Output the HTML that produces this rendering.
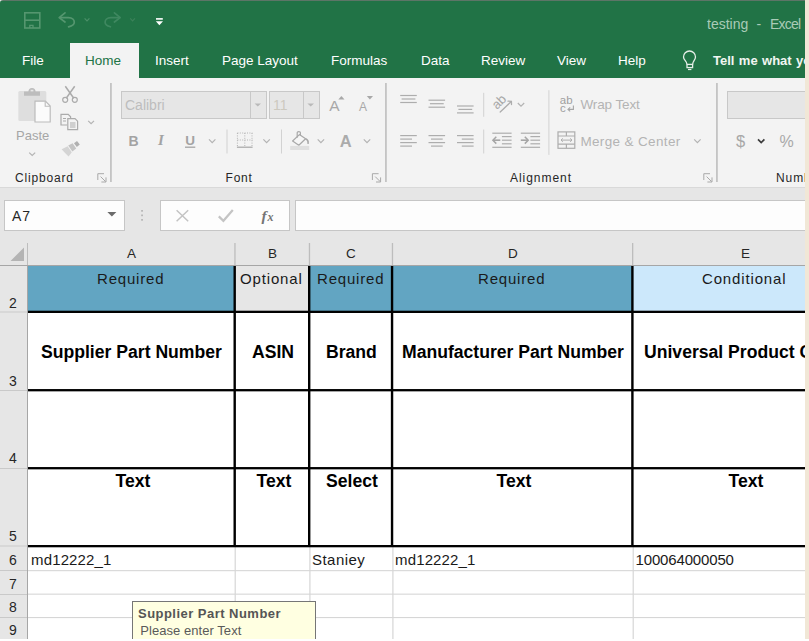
<!DOCTYPE html>
<html>
<head>
<meta charset="utf-8">
<title>testing - Excel</title>
<style>
*{box-sizing:border-box;margin:0;padding:0}
html,body{width:809px;height:641px;overflow:hidden;background:#fff}
body{font-family:"Liberation Sans",sans-serif;position:relative;color:#222}
#app{position:absolute;left:0;top:0;width:805px;height:639px;overflow:hidden;background:#e6e6e6}
#strip{position:absolute;left:805px;top:0;width:4px;height:639px;background:#f1e7d6}
.a{position:absolute}
.t{position:absolute;white-space:nowrap;line-height:1}
/* title */
#title{left:0;top:0;width:805px;height:78px;background:#217346}
#topline{left:0;top:0;width:805px;height:1px;background:#5d7567}
.tab{color:#fff;font-size:13.5px;top:54px}
#hometab{left:70px;top:43px;width:69px;height:36px;background:#f3f3f3}
/* ribbon */
#ribbon{left:0;top:78px;width:805px;height:109px;background:#f3f3f3}
#ribline{left:0;top:187px;width:805px;height:1px;background:#d9d9d9}
.gsep{width:2px;background:linear-gradient(to right,#c0c0c0,#d0d0d0);top:83px;height:99px}
.glabel{font-size:12px;color:#262626;top:172px;letter-spacing:.4px}
.dis{color:#a6a6a6}
.box{background:#e6e6e6;border:1px solid #c8c8c8}
/* formula bar */
.fbox{background:#fdfdfd;border:1px solid #c6c6c6}
/* grid */
#grid{left:0;top:243px;width:805px;height:396px;background:#fff}
.hdr{background:#e6e6e6}
.colh{font-size:13.5px;color:#262626;top:247px}
.rowh{font-size:14px;color:#262626;width:25.6px;text-align:center;left:0}
.hl{height:1px;background:#d4d4d4}
.vl{width:1px;background:#d4d4d4}
.bk{background:#000}
.c11{font-size:15px;color:#1a1a1a}
.b16{font-size:17.6px;font-weight:bold;color:#000}
</style>
</head>
<body>
<div id="app">
  <!-- TITLE BAR -->
  <div id="title" class="a"></div>
  <div id="topline" class="a"></div>
  <div id="hometab" class="a"></div>
  <svg class="a" style="left:0;top:0" width="200" height="43" viewBox="0 0 200 43" fill="none">
    <!-- rounded corner -->
    <path d="M0 0 H3 A3 3 0 0 0 0 3 Z" fill="#e9efe9"/>
    <!-- save -->
    <g stroke="#55966f" stroke-width="1.6">
      <rect x="24.8" y="12.8" width="15" height="15.2"/>
      <path d="M25 20.2 H40"/>
      <path d="M29.8 28 V25.4 H33 V28" stroke-width="1.3"/>
    </g>
    <!-- undo -->
    <g stroke="#55966f" stroke-width="1.7" stroke-linecap="round" stroke-linejoin="round">
      <path d="M65 12.8 L59.2 17.6 L65 22"/>
      <path d="M60 17.6 H68.5 C72.5 17.6 74.3 20 74.3 22.2 C74.3 24.6 72 26 68.6 26.8"/>
    </g>
    <path d="M84.6 18.4 L87 20.9 L89.4 18.4" stroke="#4b8f68" stroke-width="1.2"/>
    <!-- redo -->
    <g stroke="#3f8860" stroke-width="1.7" stroke-linecap="round" stroke-linejoin="round">
      <path d="M114.4 12.8 L120.2 17.6 L114.4 22"/>
      <path d="M119.4 17.6 H110.9 C106.9 17.6 105.1 20 105.1 22.2 C105.1 24.6 107.4 26 110.4 26.8"/>
    </g>
    <path d="M130.2 18.4 L132.6 20.9 L135 18.4" stroke="#3b8159" stroke-width="1.2"/>
    <!-- customize -->
    <rect x="156" y="18.1" width="6.8" height="1.6" fill="#fff"/>
    <path d="M155.8 21.3 H163 L159.4 25.2 Z" fill="#fff"/>
  </svg>
  <div class="t" style="left:707px;top:16.6px;font-size:14px;color:#a9cbb7">testing</div>
  <div class="t" style="left:756.6px;top:16.6px;font-size:14px;color:#a9cbb7">-</div>
  <div class="t" style="left:770px;top:16.6px;font-size:14px;color:#a9cbb7;letter-spacing:-.75px">Excel</div>
  <div class="t tab" style="left:22px">File</div>
  <div class="t tab" style="left:85px;color:#217346">Home</div>
  <div class="t tab" style="left:155px">Insert</div>
  <div class="t tab" style="left:222px">Page Layout</div>
  <div class="t tab" style="left:331px">Formulas</div>
  <div class="t tab" style="left:421px">Data</div>
  <div class="t tab" style="left:481px">Review</div>
  <div class="t tab" style="left:557px">View</div>
  <div class="t tab" style="left:618px">Help</div>
  <div class="t tab" style="left:713px;top:53.6px;font-weight:bold;font-size:13px;word-spacing:.8px;color:#f1f6f2">Tell me what you want to do</div>

  <svg class="a" style="left:678px;top:46px" width="24" height="28" viewBox="678 46 24 28" fill="none" stroke="#e6eee8" stroke-width="1.3">
    <path d="M687 64.4 C687 61.4 683.5 60 683.5 57 A6 6 0 0 1 695.5 57 C695.5 60 692.6 61.4 692.6 64.4"/>
    <rect x="687" y="64.4" width="5.6" height="3.2"/>
    <path d="M688 69.5 H691.4" stroke-width="1.2"/>
  </svg>
  <!-- RIBBON -->
  <div id="ribbon" class="a"></div>
  <div id="ribline" class="a"></div>
  <div class="a gsep" style="left:110px"></div>
  <div class="a gsep" style="left:384.6px"></div>
  <div class="a gsep" style="left:716px"></div>
  <!-- clipboard group -->
  <svg class="a" style="left:0;top:78px" width="112" height="110" viewBox="0 78 112 110" fill="none">
    <!-- paste -->
    <rect x="18.3" y="91" width="28" height="30" rx="1.5" fill="#dedede"/>
    <path d="M24 95.8 V91.6 H28.4 C28.4 89.6 29.8 88 32 88 C34.2 88 35.6 89.6 35.6 91.6 H40 V95.8 Z" fill="#bdbdbd"/>
    <rect x="30.6" y="89.8" width="2.8" height="1.6" fill="#e8e8e8"/>
    <path d="M35 101.2 H45.4 L50.2 106 V122 H35 Z" fill="#fbfbfb" stroke="#bcbcbc" stroke-width="1.2"/>
    <path d="M45.2 101.4 V106.2 H50" stroke="#bcbcbc" stroke-width="1.1"/>
    <path d="M29.2 152.6 L32.2 155.5 L35.2 152.6" stroke="#b3b3b3" stroke-width="1.2"/>
    <!-- scissors -->
    <g stroke="#ababab" stroke-width="1.5">
      <path d="M65.3 86.2 L73.8 98.2"/>
      <path d="M74.7 86.2 L66.2 98.2"/>
      <circle cx="65.2" cy="99.8" r="2.5" stroke-width="1.2"/>
      <circle cx="74.8" cy="99.8" r="2.5" stroke-width="1.2"/>
    </g>
    <!-- copy -->
    <g stroke="#ababab" stroke-width="1.2">
      <path d="M67 125 H61 V114.4 H68.2 L70.6 116.8 V118"/>
      <path d="M67.8 118.6 H75 L77.6 121.2 V129.6 H67.8 Z" fill="#f3f3f3"/>
      <path d="M63 118.5 H66 M63 121 H66 M70 123 H75.5 M70 125 H75.5 M70 127 H75.5" stroke-width="1"/>
    </g>
    <path d="M88.2 120.8 L91.1 123.7 L94 120.8" stroke="#b3b3b3" stroke-width="1.2"/>
    <!-- format painter -->
    <path d="M74 143.2 L77 141 L79.8 144.6 L76.8 147 Z" fill="#b0b0b0"/>
    <path d="M68.2 145.6 L72.6 143.2 L76.2 148.6 L72.4 151.6 Z" fill="#c4c4c4"/>
    <path d="M61.6 149.2 L67.6 146.2 L71.8 152.2 L68.6 156.6 C66 154 63.6 151.6 61.6 149.2 Z" fill="#d4d4d4"/>
    <!-- dialog launcher -->
    <g stroke="#a9a9a9" stroke-width="1">
      <path d="M97.8 180 V173.7 H104"/>
      <path d="M100.6 176.6 L105.6 181.6"/>
      <path d="M106 177.4 V182 H101.4"/>
    </g>
  </svg>
  <div class="t dis" style="left:16px;top:129px;font-size:13px">Paste</div>
  <div class="t glabel" style="left:15px;letter-spacing:.83px">Clipboard</div>
  <!-- font/alignment/number groups -->
  <div class="a box" style="left:121px;top:91px;width:146px;height:28px"></div>
  <div class="a" style="left:250px;top:92px;width:1px;height:26px;background:#c8c8c8"></div>
  <div class="a box" style="left:269px;top:91px;width:51px;height:28px"></div>
  <div class="a" style="left:303px;top:92px;width:1px;height:26px;background:#c8c8c8"></div>
  <div class="a box" style="left:727px;top:91px;width:90px;height:28px"></div>
  <div class="t" style="left:125px;top:98px;font-size:14px;color:#bdbdbd">Calibri</div>
  <div class="t" style="left:273px;top:98px;font-size:14px;color:#cdc9bf">11</div>
  <div class="t" style="left:128.5px;top:133.5px;font-size:14px;font-weight:bold;color:#a3a3a3">B</div>
  <div class="t" style="left:158px;top:132.5px;font-size:15px;font-style:italic;font-weight:bold;color:#a3a3a3;font-family:'Liberation Serif',serif">I</div>
  <div class="t" style="left:185.3px;top:133.5px;font-size:13.5px;font-weight:bold;color:#a3a3a3">U</div>
  <div class="t" style="left:329.3px;top:98px;font-size:15.5px;color:#a8a8a8">A</div>
  <div class="t" style="left:359px;top:101px;font-size:12px;color:#a8a8a8">A</div>
  <div class="t" style="left:339.8px;top:132.8px;font-size:16.5px;font-weight:bold;color:#ababab">A</div>
  <div class="t dis" style="left:580.4px;top:98.4px;font-size:13.5px;letter-spacing:-.1px;color:#b4b4b4">Wrap Text</div>
  <div class="t dis" style="left:580.4px;top:135px;font-size:13.5px;letter-spacing:.35px;color:#b4b4b4">Merge &amp; Center</div>
  <div class="t" style="left:736px;top:132.8px;font-size:16.5px;color:#a8a8a8">$</div>
  <div class="t" style="left:779.5px;top:133.6px;font-size:16px;color:#a8a8a8">%</div>
  <svg class="a" style="left:112px;top:78px" width="693" height="110" viewBox="112 78 693 110" fill="none">
    <!-- dropdown arrows -->
    <path d="M254.6 103.4 H261 L257.8 106.6 Z" fill="#b9b9b9"/>
    <path d="M307.4 103.4 H314 L310.7 106.6 Z" fill="#b9b9b9"/>
    <!-- U underline -->
    <path d="M185 147.2 H195.3" stroke="#a3a3a3" stroke-width="1.3"/>
    <path d="M209 139.4 L212.2 142.6 L215.4 139.4" stroke="#b3b3b3" stroke-width="1.2" fill="none"/>
    <rect x="226.5" y="129.5" width="1" height="24.0" fill="#d2d2d2"/>
    <!-- borders icon -->
    <g stroke="#b3b3b3" stroke-width="1" stroke-dasharray="1 1.4">
      <path d="M237.4 133 H252.4 M237.4 140 H252.4"/>
      <path d="M237.4 133 V146.5 M244.8 133 V146.5 M252 133 V146.5"/>
    </g>
    <path d="M236.9 147.2 H252.6" stroke="#a6a6a6" stroke-width="1.2"/>
    <path d="M263.4 139.4 L266.59999999999997 142.6 L269.79999999999995 139.4" stroke="#b3b3b3" stroke-width="1.2" fill="none"/>
    <rect x="281" y="129.5" width="1" height="24.0" fill="#d2d2d2"/>
    <!-- fill bucket -->
    <g stroke="#a8a8a8" stroke-width="1.2" stroke-linejoin="round">
      <path d="M299.4 134.6 L292.6 141 L298.8 145.2 L305.6 138.8 Z" fill="#f6f6f6"/>
      <path d="M297.2 137.8 V132.6 C297.2 131.2 300.4 131.2 300.4 132.6 V135.6"/>
      <path d="M305.6 138.8 C307.6 139.6 308.4 141.6 308 143.8" stroke-width="1.6"/>
    </g>
    <rect x="290.2" y="145.9" width="19" height="4.1" fill="#dfdfdf"/>
    <path d="M317.7 139.4 L320.9 142.6 L324.09999999999997 139.4" stroke="#b3b3b3" stroke-width="1.2" fill="none"/>
    <!-- grow/shrink triangles -->
    <path d="M338.3 99.5 L341.4 96 L344.5 99.5 Z" fill="#a8a8a8"/>
    <path d="M366.8 96 H373 L369.9 99.5 Z" fill="#a8a8a8"/>
    <path d="M363.8 139.4 L367.0 142.6 L370.2 139.4" stroke="#b3b3b3" stroke-width="1.2" fill="none"/>
    <g stroke="#a9a9a9" stroke-width="1" fill="none"><path d="M372.4 180.0 V173.7 H378.59999999999997"/><path d="M375.2 176.6 L380.2 181.6"/><path d="M380.59999999999997 177.39999999999998 V182.0 H376.0"/></g>
    <!-- align icons -->
    <path d="M400.2 95.5 H416.8" stroke="#adadad" stroke-width="1.2"/><path d="M401.59999999999997 99 H415.40000000000003" stroke="#adadad" stroke-width="1.2"/><path d="M400.2 102.5 H416.8" stroke="#adadad" stroke-width="1.2"/><path d="M428.5 100.2 H445.1" stroke="#adadad" stroke-width="1.2"/><path d="M429.9 103.7 H443.70000000000005" stroke="#adadad" stroke-width="1.2"/><path d="M428.5 107.2 H445.1" stroke="#adadad" stroke-width="1.2"/><path d="M457 106 H473.6" stroke="#adadad" stroke-width="1.2"/><path d="M458.4 109.4 H472.20000000000005" stroke="#adadad" stroke-width="1.2"/><path d="M457 112.9 H473.6" stroke="#adadad" stroke-width="1.2"/><path d="M400.2 135.6 H416.8" stroke="#adadad" stroke-width="1.2"/><path d="M428.5 135.6 H445.1" stroke="#adadad" stroke-width="1.2"/><path d="M457 135.6 H473.6" stroke="#adadad" stroke-width="1.2"/><path d="M400.2 139.1 H412" stroke="#adadad" stroke-width="1.2"/><path d="M431 139.1 H442.7" stroke="#adadad" stroke-width="1.2"/><path d="M461.8 139.1 H473.6" stroke="#adadad" stroke-width="1.2"/><path d="M400.2 142.6 H416.8" stroke="#adadad" stroke-width="1.2"/><path d="M428.5 142.6 H445.1" stroke="#adadad" stroke-width="1.2"/><path d="M457 142.6 H473.6" stroke="#adadad" stroke-width="1.2"/><path d="M400.2 146.1 H412" stroke="#adadad" stroke-width="1.2"/><path d="M431 146.1 H442.7" stroke="#adadad" stroke-width="1.2"/><path d="M461.8 146.1 H473.6" stroke="#adadad" stroke-width="1.2"/><path d="M492.3 133.2 H511.6" stroke="#adadad" stroke-width="1.2"/><path d="M492.3 147.3 H511.6" stroke="#adadad" stroke-width="1.2"/><path d="M501.90000000000003 136.6 H511.6" stroke="#adadad" stroke-width="1.2"/><path d="M501.90000000000003 140.2 H511.6" stroke="#adadad" stroke-width="1.2"/><path d="M501.90000000000003 143.8 H511.6" stroke="#adadad" stroke-width="1.2"/><path d="M500.3 140.2 H493.3" stroke="#a6a6a6" stroke-width="1.6"/><path d="M496.3 136.8 L492.90000000000003 140.2 L496.3 143.6" stroke="#a6a6a6" stroke-width="1.5" fill="none"/><path d="M520.8 133.2 H540.0999999999999" stroke="#adadad" stroke-width="1.2"/><path d="M520.8 147.3 H540.0999999999999" stroke="#adadad" stroke-width="1.2"/><path d="M530.4 136.6 H540.0999999999999" stroke="#adadad" stroke-width="1.2"/><path d="M530.4 140.2 H540.0999999999999" stroke="#adadad" stroke-width="1.2"/><path d="M530.4 143.8 H540.0999999999999" stroke="#adadad" stroke-width="1.2"/><path d="M520.8 140.2 H527.8" stroke="#a6a6a6" stroke-width="1.6"/><path d="M524.8 136.8 L528.1999999999999 140.2 L524.8 143.6" stroke="#a6a6a6" stroke-width="1.5" fill="none"/>
    <rect x="483.2" y="92.8" width="1" height="24.0" fill="#d2d2d2"/>
    <rect x="483.2" y="129.5" width="1" height="24.0" fill="#d2d2d2"/>
    <!-- orientation -->
    <g stroke="#adadad" stroke-width="1.3" stroke-linecap="round">
      <path d="M500.2 112 L511 101.8"/>
      <path d="M508 101.1 L511.4 101.3 L511.5 104.6"/>
    </g>
    <g transform="translate(497 110) rotate(-45)">
      <text x="0" y="0" font-family="Liberation Sans, sans-serif" font-size="13" fill="#a8a8a8">ab</text>
    </g>
    <path d="M517.8 103 L521.0 106.2 L524.1999999999999 103" stroke="#b3b3b3" stroke-width="1.2" fill="none"/>
    <rect x="548.4" y="90.2" width="1" height="64.7" fill="#d2d2d2"/>
    <!-- wrap text icon -->
    <text x="559.8" y="103.8" font-family="Liberation Sans, sans-serif" font-size="11.5" fill="#a0a0a0">ab</text>
    <text x="560" y="112.2" font-family="Liberation Sans, sans-serif" font-size="11.5" fill="#a0a0a0">c</text>
    <path d="M573.4 105.6 V109.4 H568.4" stroke="#a6a6a6" stroke-width="1.1"/>
    <path d="M570.2 107.4 L568 109.4 L570.2 111.4" stroke="#a6a6a6" stroke-width="1.1"/>
    <!-- merge icon -->
    <g stroke="#adadad" stroke-width="1.2">
      <rect x="558" y="131.9" width="16.8" height="16.4"/>
      <path d="M558 136 H574.8 M558 144.2 H574.8 M566.4 131.9 V136 M566.4 144.2 V148.3"/>
      <path d="M561 140.1 H572" stroke-width="1"/>
      <path d="M562.8 138.4 L561 140.1 L562.8 141.8 M570.2 138.4 L572 140.1 L570.2 141.8" stroke-width="1"/>
    </g>
    <path d="M694.2 139.4 L697.4000000000001 142.6 L700.6 139.4" stroke="#b3b3b3" stroke-width="1.2" fill="none"/>
    <g stroke="#a9a9a9" stroke-width="1" fill="none"><path d="M703.8 180.0 V173.7 H710.0"/><path d="M706.5999999999999 176.6 L711.5999999999999 181.6"/><path d="M712.0 177.39999999999998 V182.0 H707.4"/></g>
    <path d="M758 139.4 L761.2 142.6 L764.4 139.4" stroke="#3c3c3c" stroke-width="1.7" fill="none"/>
  </svg>
  <div class="t glabel" style="left:225.6px;letter-spacing:.75px">Font</div>
  <div class="t glabel" style="left:510px;letter-spacing:.96px">Alignment</div>
  <div class="t glabel" style="left:776px;letter-spacing:.9px">Number</div>

  <!-- FORMULA BAR -->
  <div class="a fbox" style="left:4px;top:200px;width:120.5px;height:31px"></div>
  <div class="t" style="left:12px;top:208.8px;font-size:14px;color:#262626;letter-spacing:1px">A7</div>
  <div class="a fbox" style="left:160px;top:200px;width:130px;height:31px"></div>
  <div class="a fbox" style="left:295px;top:200px;width:520px;height:31px"></div>

  <svg class="a" style="left:100px;top:196px" width="200" height="40" viewBox="100 196 200 40" fill="none">
    <path d="M107.4 211.9 H116.4 L111.9 216.4 Z" fill="#6b6b6b"/>
    <g fill="#b3b3b3"><rect x="141.2" y="210" width="1.7" height="1.7"/><rect x="141.2" y="214.5" width="1.7" height="1.7"/><rect x="141.2" y="219" width="1.7" height="1.7"/></g>
    <path d="M176.6 210.2 L188.2 221.2 M188.2 210.2 L176.6 221.2" stroke="#c3c3c3" stroke-width="1.5"/>
    <path d="M218.8 216.4 L223.4 220.8 L232.8 210" stroke="#c4c4c4" stroke-width="2.2"/>
    <text x="261.6" y="221" font-family="Liberation Serif, serif" font-style="italic" font-weight="bold" font-size="15.5" fill="#757575">f</text>
    <text x="267.4" y="221.4" font-family="Liberation Serif, serif" font-style="italic" font-weight="bold" font-size="12" fill="#757575">x</text>
  </svg>
  <!-- GRID -->
  <div id="grid" class="a"></div>
  <!-- header bands -->
  <div class="a hdr" style="left:0;top:243px;width:805px;height:23px"></div>
  <div class="a hdr" style="left:0;top:243px;width:28px;height:396px"></div>
  <!-- row 2 fills -->
  <div class="a" style="left:28px;top:266px;width:207px;height:46px;background:#62a5c2"></div>
  <div class="a" style="left:235px;top:266px;width:75px;height:46px;background:#e6e6e6"></div>
  <div class="a" style="left:310px;top:266px;width:323px;height:46px;background:#62a5c2"></div>
  <div class="a" style="left:633px;top:266px;width:172px;height:46px;background:#cce8fb"></div>
  <svg class="a" style="left:0;top:243px" width="805" height="396" viewBox="0 243 805 396">
    <!-- thin grid lines -->
    <g fill="#d6d6d6">
      <rect x="28" y="570.1" width="777" height="1.1"/>
      <rect x="28" y="593.6" width="777" height="1.1"/>
      <rect x="28" y="617" width="777" height="1.1"/>
      <rect x="234.6" y="547" width="1.2" height="92"/>
      <rect x="309.3" y="547" width="1.2" height="92"/>
      <rect x="392.3" y="547" width="1.2" height="92"/>
      <rect x="632.6" y="547" width="1.2" height="92"/>
    </g>
    <!-- header lines -->
    <g fill="#bdbdbd">
      <rect x="27" y="243" width="1" height="22"/>
      <rect x="234.3" y="243" width="1.3" height="22"/>
      <rect x="308.8" y="243" width="1.3" height="22"/>
      <rect x="391.8" y="243" width="1.3" height="22"/>
      <rect x="632" y="243" width="1.3" height="22"/>
    </g>
    <g fill="#a6a6a6">
      <rect x="0" y="265" width="805" height="1"/>
      <rect x="27" y="265" width="1" height="374"/>
    </g>
    <g fill="#c9c9c9">
      <rect x="0" y="311.5" width="27" height="1"/>
      <rect x="0" y="390" width="27" height="1"/>
      <rect x="0" y="468" width="27" height="1"/>
      <rect x="0" y="545.5" width="27" height="1"/>
      <rect x="0" y="570" width="27" height="1"/>
      <rect x="0" y="594" width="27" height="1"/>
      <rect x="0" y="617" width="27" height="1"/>
    </g>
    <!-- thick black borders -->
    <g fill="#000">
      <rect x="28" y="310.7" width="777" height="2.3"/>
      <rect x="28" y="389.05" width="777" height="2.3"/>
      <rect x="28" y="467.05" width="777" height="2.3"/>
      <rect x="28" y="545" width="777" height="2.3"/>
      <rect x="233.5" y="266" width="2.4" height="280"/>
      <rect x="308" y="266" width="2.4" height="280"/>
      <rect x="390.85" y="266" width="2.4" height="280"/>
      <rect x="631.2" y="266" width="2.4" height="280"/>
    </g>
    <!-- select all triangle -->
    <path d="M24 247.5 L24 261 L10.5 261 Z" fill="#b4b4b4"/>
  </svg>
  <!-- column letters -->
  <div class="t colh" style="left:127px">A</div>
  <div class="t colh" style="left:268px">B</div>
  <div class="t colh" style="left:346px">C</div>
  <div class="t colh" style="left:508px">D</div>
  <div class="t colh" style="left:741px">E</div>
  <!-- row numbers -->
  <div class="t rowh" style="top:295.6px">2</div>
  <div class="t rowh" style="top:374px">3</div>
  <div class="t rowh" style="top:450.6px">4</div>
  <div class="t rowh" style="top:529px">5</div>
  <div class="t rowh" style="top:553px">6</div>
  <div class="t rowh" style="top:577px">7</div>
  <div class="t rowh" style="top:600px">8</div>
  <div class="t rowh" style="top:623px">9</div>
  <!-- row 2 text -->
  <div class="t c11" style="left:97px;top:271px;letter-spacing:.8px">Required</div>
  <div class="t c11" style="left:240px;top:271px;letter-spacing:.85px">Optional</div>
  <div class="t c11" style="left:317px;top:271px;letter-spacing:.8px">Required</div>
  <div class="t c11" style="left:478px;top:271px;letter-spacing:.8px">Required</div>
  <div class="t c11" style="left:702px;top:271px;letter-spacing:.85px">Conditional</div>
  <!-- row 3 text -->
  <div class="t b16" style="left:41px;top:344px">Supplier Part Number</div>
  <div class="t b16" style="left:252px;top:344px">ASIN</div>
  <div class="t b16" style="left:326px;top:344px">Brand</div>
  <div class="t b16" style="left:402px;top:344px">Manufacturer Part Number</div>
  <div class="t b16" style="left:644px;top:344px">Universal Product Code</div>
  <!-- row 5 text -->
  <div class="t b16" style="left:115.5px;top:473px">Text</div>
  <div class="t b16" style="left:256.5px;top:473px">Text</div>
  <div class="t b16" style="left:326px;top:473px">Select</div>
  <div class="t b16" style="left:496.5px;top:473px">Text</div>
  <div class="t b16" style="left:728.5px;top:473px">Text</div>
  <!-- row 6 text -->
  <div class="t c11" style="left:31px;top:552px;letter-spacing:.15px">md12222_1</div>
  <div class="t c11" style="left:312px;top:552px;letter-spacing:.46px">Staniey</div>
  <div class="t c11" style="left:395px;top:552px;letter-spacing:.15px">md12222_1</div>
  <div class="t c11" style="left:635.5px;top:552px;letter-spacing:-.15px">100064000050</div>
  <!-- tooltip -->
  <div class="a" style="left:132px;top:601px;width:184px;height:40px;background:#ffffe1;border:1px solid #767676"></div>
  <div class="t" style="left:138px;top:607px;font-size:13px;font-weight:bold;color:#555;letter-spacing:.47px">Supplier Part Number</div>
  <div class="t" style="left:140.3px;top:624.2px;font-size:13px;color:#5a5a5a;letter-spacing:.05px">Please enter Text</div>
</div>
<div id="strip"></div>
</body>
</html>
